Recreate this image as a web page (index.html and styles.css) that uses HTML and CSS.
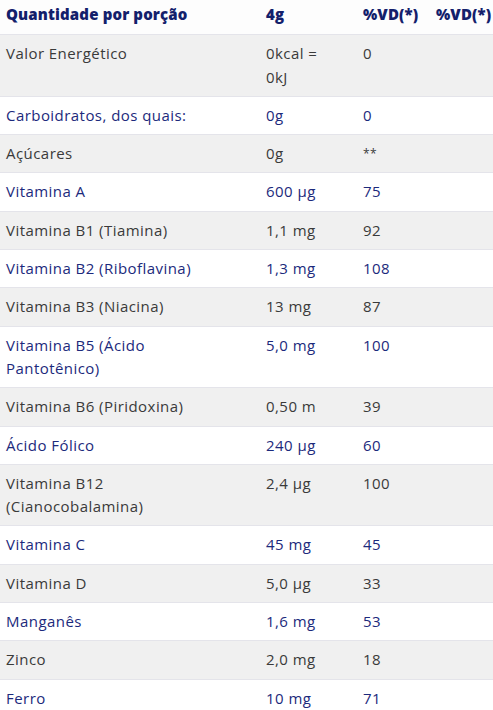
FILE: index.html
```html
<!DOCTYPE html>
<html lang="pt">
<head>
<meta charset="utf-8">
<link rel="stylesheet" href="styles.css">
</head>
<body>
<div class="wrap">
<table class="nutri">
<colgroup><col class="c1"><col class="c2"><col class="c3"><col class="c4"></colgroup>
<thead>
<tr><th>Quantidade por porção</th><th>4g</th><th>%VD(*)</th><th>%VD(*)</th></tr>
</thead>
<tbody>
<tr class="g"><td>Valor Energético</td><td>0kcal =<br>0kJ</td><td>0</td><td></td></tr>
<tr><td>Carboidratos, dos quais:</td><td>0g</td><td>0</td><td></td></tr>
<tr class="g"><td>Açúcares</td><td>0g</td><td class="ast">**</td><td></td></tr>
<tr><td>Vitamina A</td><td>600 µg</td><td>75</td><td></td></tr>
<tr class="g"><td>Vitamina B1 (Tiamina)</td><td>1,1 mg</td><td>92</td><td></td></tr>
<tr><td>Vitamina B2 (Riboflavina)</td><td>1,3 mg</td><td>108</td><td></td></tr>
<tr class="g"><td>Vitamina B3 (Niacina)</td><td>13 mg</td><td>87</td><td></td></tr>
<tr><td>Vitamina B5 (Ácido<br>Pantotênico)</td><td>5,0 mg</td><td>100</td><td></td></tr>
<tr class="g"><td>Vitamina B6 (Piridoxina)</td><td>0,50 m</td><td>39</td><td></td></tr>
<tr><td>Ácido Fólico</td><td>240 µg</td><td>60</td><td></td></tr>
<tr class="g"><td>Vitamina B12<br>(Cianocobalamina)</td><td>2,4 µg</td><td>100</td><td></td></tr>
<tr><td>Vitamina C</td><td>45 mg</td><td>45</td><td></td></tr>
<tr class="g"><td>Vitamina D</td><td>5,0 µg</td><td>33</td><td></td></tr>
<tr><td>Manganês</td><td>1,6 mg</td><td>53</td><td></td></tr>
<tr class="g"><td>Zinco</td><td>2,0 mg</td><td>18</td><td></td></tr>
<tr><td>Ferro</td><td>10 mg</td><td>71</td><td></td></tr>
</tbody>
</table>
</div>
</body>
</html>
```
FILE: styles.css
```css
html, body {
  margin: 0;
  padding: 0;
  background: #ffffff;
}
.wrap {
  width: 493px;
  overflow: hidden;
}
.nutri {
  width: 540px;
  border-collapse: collapse;
  table-layout: fixed;
  font-family: "Open Sans", "Noto Sans", sans-serif;
  font-size: 15px;
  line-height: 23.3px;
  letter-spacing: 0.45px;
  color: #1c2a7c;
}
.c1 { width: 260px; }
.c2 { width: 97px; }
.c3 { width: 73px; }
.c4 { width: 110px; }
.nutri th {
  text-align: left;
  font-weight: 800;
  color: #13206b;
  background: #fdfdfd;
  padding: 3px 6px 8px;
  height: 23px;
  font-size: 15px;
  letter-spacing: 0.15px;
  white-space: nowrap;
}
.nutri td {
  text-align: left;
  vertical-align: top;
  padding: 7px 6px 7px;
  border-top: 1px solid #e4e4ea;
  white-space: nowrap;
}
.nutri tr.g td {
  background: #f0f0f0;
  color: #3a3a3a;
}
.nutri td.ast {
  font-size: 12px;
}
```
